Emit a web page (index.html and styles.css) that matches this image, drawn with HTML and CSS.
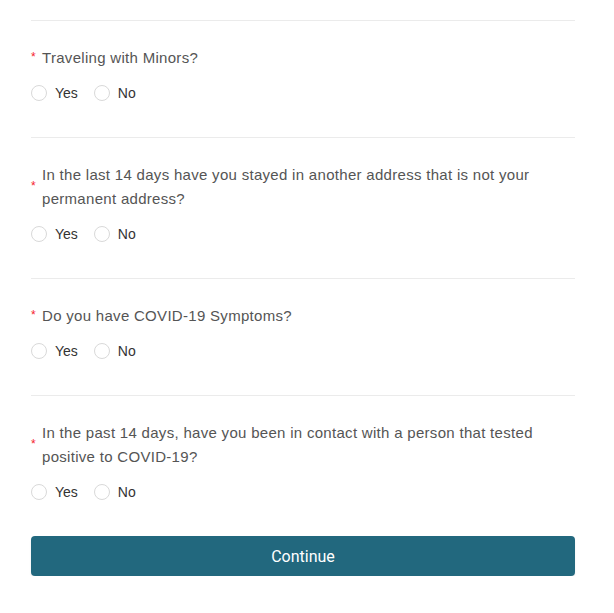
FILE: index.html
```html
<!DOCTYPE html>
<html lang="en">
<head>
  <meta charset="UTF-8" />
  <meta name="viewport" content="width=device-width, initial-scale=1" />
  <title>Health Declaration</title>
  <link rel="stylesheet" href="styles.css">
</head>
<body>
<main class="form">
  <div class="question">
    <div class="label"><span class="req">*</span><span class="text">Traveling with Minors?</span></div>
    <div class="options">
      <label class="radio"><span class="dot"></span>Yes</label>
      <label class="radio"><span class="dot"></span>No</label>
    </div>
  </div>

  <div class="question">
    <div class="label"><span class="req">*</span><span class="text">In the last 14 days have you stayed in another address that is not your permanent address?</span></div>
    <div class="options">
      <label class="radio"><span class="dot"></span>Yes</label>
      <label class="radio"><span class="dot"></span>No</label>
    </div>
  </div>

  <div class="question">
    <div class="label"><span class="req">*</span><span class="text">Do you have COVID-19 Symptoms?</span></div>
    <div class="options">
      <label class="radio"><span class="dot"></span>Yes</label>
      <label class="radio"><span class="dot"></span>No</label>
    </div>
  </div>

  <div class="question">
    <div class="label"><span class="req">*</span><span class="text">In the past 14 days, have you been in contact with a person that tested positive to COVID-19?</span></div>
    <div class="options">
      <label class="radio"><span class="dot"></span>Yes</label>
      <label class="radio"><span class="dot"></span>No</label>
    </div>
  </div>

  <button class="continue-btn">Continue</button>
</main>
</body>
</html>
```

FILE: styles.css
```css
:root {
  --border: #ebebeb;
  --text-main: #555555;
  --text-option: #333333;
  --required: #f5222d;
  --button-bg: #22687e;
}

body {
  margin: 0;
  font-family: 'Liberation Sans', Helvetica, Arial, sans-serif;
  background: #ffffff;
  color: var(--text-main);
}

.form {
  width: 544px;
  margin: 0 auto 0 31px;
  padding-top: 20px;
}

.question {
  border-top: 1px solid var(--border);
  padding: 25px 0 32px;
}

.label {
  display: flex;
  align-items: center;
  font-size: 15px;
  line-height: 24px;
  letter-spacing: 0.3px;
  margin-bottom: 11px;
}

.req {
  color: var(--required);
  font-size: 12px;
  width: 11px;
  flex-shrink: 0;
  line-height: 12px;
  margin-top: -3px;
  letter-spacing: 0;
}

.text {
  flex: 1;
}

.options {
  display: flex;
  align-items: center;
  height: 24px;
  gap: 16px;
  font-size: 14px;
  color: var(--text-option);
}

.radio {
  display: flex;
  align-items: center;
  cursor: pointer;
}

.dot {
  width: 14px;
  height: 14px;
  border: 1px solid #d9d9d9;
  border-radius: 50%;
  margin-right: 8px;
  background: #fff;
}

.continue-btn {
  display: block;
  width: 100%;
  height: 40px;
  border: none;
  border-radius: 4px;
  background: var(--button-bg);
  color: #ffffff;
  font-family: Roboto, 'Liberation Sans', sans-serif;
  font-size: 16px;
  cursor: pointer;
  box-shadow: 0 2px 2px rgba(0, 0, 0, 0.08);
}
```
